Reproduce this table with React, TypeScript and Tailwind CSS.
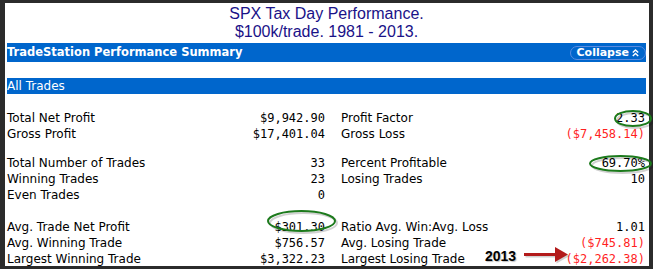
type Row = { label: string; value: string; loss?: boolean }

const groups: { left: Row; right?: Row }[][] = [
  [
    { left: { label: 'Total Net Profit', value: '$9,942.90' }, right: { label: 'Profit Factor', value: '2.33' } },
    { left: { label: 'Gross Profit', value: '$17,401.04' }, right: { label: 'Gross Loss', value: '($7,458.14)', loss: true } },
  ],
  [
    { left: { label: 'Total Number of Trades', value: '33' }, right: { label: 'Percent Profitable', value: '69.70%' } },
    { left: { label: 'Winning Trades', value: '23' }, right: { label: 'Losing Trades', value: '10' } },
    { left: { label: 'Even Trades', value: '0' } },
  ],
  [
    { left: { label: 'Avg. Trade Net Profit', value: '$301.30' }, right: { label: 'Ratio Avg. Win:Avg. Loss', value: '1.01' } },
    { left: { label: 'Avg. Winning Trade', value: '$756.57' }, right: { label: 'Avg. Losing Trade', value: '($745.81)', loss: true } },
    { left: { label: 'Largest Winning Trade', value: '$3,322.23' }, right: { label: 'Largest Losing Trade', value: '($2,262.38)', loss: true } },
  ],
]

function Cell({ row }: { row?: Row }) {
  if (!row) return <div />
  return (
    <div className="flex h-[16px] items-center justify-between">
      <span className="font-['DejaVu_Sans',sans-serif] text-[12px] text-black">{row.label}</span>
      <span
        className={
          row.loss
            ? "font-['DejaVu_Sans_Mono',monospace] text-[12px] text-[#ff1f1f]"
            : "font-['DejaVu_Sans_Mono',monospace] text-[12px] text-black"
        }
      >
        {row.value}
      </span>
    </div>
  )
}

function Oval({ x, y, w, h }: { x: number; y: number; w: number; h: number }) {
  return (
    <svg
      className="pointer-events-none absolute"
      style={{ left: x, top: y, width: w + 3, height: h + 3 }}
      viewBox={`0 0 ${w + 3} ${h + 3}`}
    >
      <ellipse cx={w / 2 + 2} cy={h / 2 + 2} rx={w / 2 - 1} ry={h / 2 - 1} fill="none" stroke="rgba(0,0,0,.18)" strokeWidth="2" />
      <ellipse cx={w / 2} cy={h / 2} rx={w / 2 - 1} ry={h / 2 - 1} fill="none" stroke="#1c7a1c" strokeWidth="2" />
    </svg>
  )
}

export default function App() {
  return (
    <div className="relative h-[269px] w-[653px] bg-[#2b2b2b] pb-[3px] pl-[5px] pr-[4px] pt-[3px]">
      <div className="h-full bg-white pl-[2px] pr-[3px] pt-[2px]">
        <div className="text-center font-['Liberation_Sans',Arial,sans-serif] text-[16px] leading-[18px] text-[#1a1288]">
          <p>SPX Tax Day Performance.</p>
          <p>$100k/trade. 1981 - 2013.</p>
        </div>

        <div className="mt-[2px] flex h-[19px] items-center justify-between bg-[#0066cc] text-white">
          <span className="font-['DejaVu_Sans',sans-serif] text-[11.5px] font-bold leading-none">TradeStation Performance Summary</span>
          <span className="flex h-[14px] items-center gap-[3px] rounded-full border-[1.5px] border-[#5a8ce0] px-[6px] font-['DejaVu_Sans',sans-serif] text-[11px] font-bold leading-none">
            Collapse
            <svg width="7" height="8" viewBox="0 0 7 8" fill="none" stroke="white" strokeWidth="1.4">
              <path d="M0.8 3.6 3.5 1 6.2 3.6" />
              <path d="M0.8 7 3.5 4.4 6.2 7" />
            </svg>
          </span>
        </div>

        <div className="mt-[16px] flex h-[16px] items-center bg-[#0066cc] font-['DejaVu_Sans',sans-serif] text-[12px] text-white">
          All Trades
        </div>

        <div className="mt-[16px] flex flex-col gap-[13px] pr-[1px]">
          {groups.map((group, gi) => (
            <div key={gi} className={gi === 2 ? 'mt-[3px] flex flex-col' : 'flex flex-col'}>
              {group.map((r, ri) => (
                <div key={ri} className="grid grid-cols-[318px_1fr] gap-x-[16px]">
                  <Cell row={r.left} />
                  <Cell row={r.right} />
                </div>
              ))}
            </div>
          ))}
        </div>
      </div>

      <Oval x={614} y={110} w={38} h={17} />
      <Oval x={589} y={155} w={63} h={17} />
      <Oval x={267} y={210} w={69} h={22} />

      <span className="absolute left-[485px] top-[248px] font-['Liberation_Sans',Arial,sans-serif] text-[14px] font-bold leading-[16px] text-black [text-shadow:1px_1px_1px_rgba(0,0,0,.25)]">
        2013
      </span>
      <svg className="pointer-events-none absolute left-[522px] top-[246px]" width="50" height="20" viewBox="0 0 50 20">
        <g transform="translate(1.5 1.5)" fill="rgba(0,0,0,.18)">
          <rect x="2" y="7" width="32" height="3" />
          <path d="M33 1 L46 8.5 L33 16 Z" />
        </g>
        <g fill="#b31b1b">
          <rect x="2" y="7" width="32" height="3" />
          <path d="M33 1 L46 8.5 L33 16 Z" />
        </g>
      </svg>
    </div>
  )
}
